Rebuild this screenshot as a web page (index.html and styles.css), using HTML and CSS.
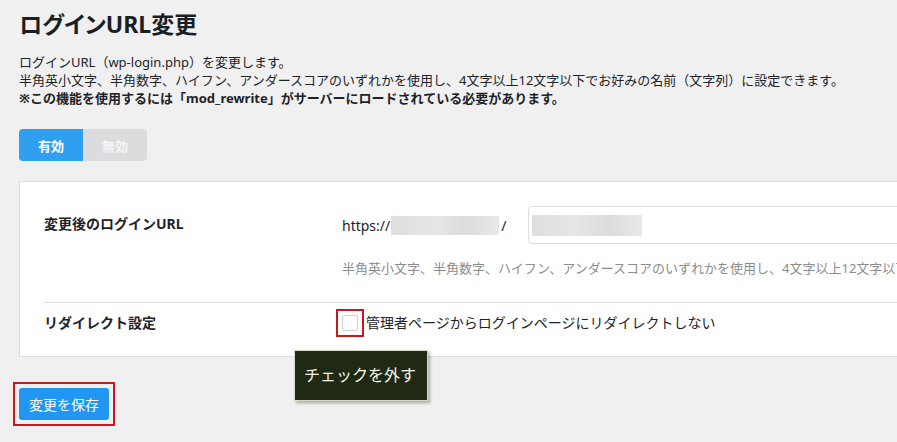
FILE: index.html
```html
<!DOCTYPE html>
<html lang="ja">
<head>
    <meta charset="UTF-8">
    <meta name="viewport" content="width=device-width, initial-scale=1.0">
    <title>ログインURL変更</title>
    <link rel="stylesheet" href="styles.css">
</head>
<body>
    <div class="wrap">
        <h1>ログインURL変更</h1>
        <p class="desc">
            ログインURL（wp-login.php）を変更します。<br>
            半角英小文字、半角数字、ハイフン、アンダースコアのいずれかを使用し、4文字以上12文字以下でお好みの名前（文字列）に設定できます。<br>
            <strong>※この機能を使用するには「mod_rewrite」がサーバーにロードされている必要があります。</strong>
        </p>

        <div class="switch">
            <button class="switch-btn active">有効</button>
            <button class="switch-btn">無効</button>
        </div>

        <div class="card">
            <div class="row row-url">
                <div class="label">変更後のログインURL</div>
                <div class="field">
                    <div class="url-line">
                        <span class="prefix">https://</span>
                        <span class="masked masked-host"></span>
                        <span class="slash">/</span>
                        <div class="url-input">
                            <span class="masked masked-slug"></span>
                        </div>
                    </div>
                    <p class="help">半角英小文字、半角数字、ハイフン、アンダースコアのいずれかを使用し、4文字以上12文字以下でお好みの名前（文字列）に設定できます。</p>
                </div>
            </div>
            <div class="row row-redirect">
                <div class="label">リダイレクト設定</div>
                <div class="field">
                    <label class="check">
                        <span class="mark">
                            <input type="checkbox" class="check-box">
                        </span>
                        <span>管理者ページからログインページにリダイレクトしない</span>
                        <span class="tooltip">チェックを外す</span>
                    </label>
                </div>
            </div>
        </div>

        <div class="actions">
            <button class="save">変更を保存</button>
        </div>
    </div>
</body>
</html>
```

FILE: styles.css
```css
html {
    overflow: hidden;
}

body {
    margin: 0;
    padding: 0;
    min-height: 100vh;
    background-color: #f0f0f1;
    color: #1d2327;
    font-family: "Noto Sans", "Noto Sans CJK JP", sans-serif;
    font-size: 13px;
}

.wrap {
    padding: 0 19px 22px;
    width: 1100px;
}

h1 {
    font-size: 23px;
    font-weight: bold;
    line-height: 30px;
    margin: 9px 0 0;
    color: #1a1f24;
    font-feature-settings: "palt";
}

.desc {
    margin: 14px 0 0;
    line-height: 18px;
}

.switch {
    display: flex;
    margin-top: 22px;
}

.switch-btn {
    width: 64px;
    height: 32px;
    border: none;
    background-color: #dcdcde;
    color: #f4f4f4;
    font-family: inherit;
    font-size: 13px;
    font-weight: bold;
    padding: 0;
}

.switch-btn:first-child {
    border-radius: 4px 0 0 4px;
}

.switch-btn:last-child {
    border-radius: 0 4px 4px 0;
}

.switch-btn.active {
    background-color: #2f9ff0;
    color: #fff;
}

.card {
    margin-top: 20px;
    background-color: #fff;
    border: 1px solid #dcdcde;
    padding: 0 24px;
}

.row {
    display: flex;
    align-items: flex-start;
}

.row-url {
    padding: 24px 0 25px;
    border-bottom: 1px solid #dcdcde;
}

.row-redirect {
    padding: 10px 0 23px;
}

.label {
    width: 298px;
    flex-shrink: 0;
    font-size: 14px;
    font-weight: bold;
    line-height: 20px;
}

.row-url .label {
    margin-top: 8px;
}

.field {
    flex: 1;
    font-size: 14px;
}

.url-line {
    display: flex;
    align-items: center;
    height: 38px;
}

.masked {
    display: inline-block;
    background: linear-gradient(90deg, #dedede, #e6e6e6 40%, #dcdcdc 70%, #e8e8e8);
}

.masked-host {
    width: 108px;
    height: 19px;
    margin-left: 1px;
}

.slash {
    margin: 0 22px 0 2px;
}

.url-input {
    flex: 1;
    height: 36px;
    border: 1px solid #dcdcde;
    border-radius: 4px;
    display: flex;
    align-items: center;
    padding-left: 3px;
}

.masked-slug {
    width: 110px;
    height: 21px;
}

.help {
    margin: 15px 0 0;
    font-size: 13px;
    line-height: 18px;
    color: #8c8c8c;
    white-space: nowrap;
}

.check {
    position: relative;
    display: flex;
    align-items: center;
    line-height: 20px;
}

/* red annotation frames from the screenshot */
.mark {
    position: relative;
    display: flex;
    margin-right: 8px;
}

.mark::after,
.save::after {
    content: '';
    position: absolute;
    top: -6px;
    right: -6px;
    bottom: -6px;
    left: -6px;
    border: 2px solid #c8171d;
}

.check-box {
    appearance: none;
    width: 16px;
    height: 16px;
    margin: 0;
    border: 1px solid #d0d0d0;
    border-radius: 2px;
    background-color: #fff;
}

.tooltip {
    position: absolute;
    left: -48px;
    top: 37px;
    width: 134px;
    height: 51px;
    box-sizing: border-box;
    padding-left: 9px;
    background-color: #1f2914;
    color: #f3f3e6;
    font-size: 16px;
    line-height: 49px;
    border: 1px solid #d8d8cc;
    box-shadow: 2px 2px 3px rgba(0, 0, 0, 0.3);
}

.actions {
    margin-top: 31px;
    display: flex;
}

.save {
    position: relative;
    height: 32px;
    padding: 0 10px;
    border: none;
    border-radius: 3px;
    background-color: #2196f3;
    color: #fff;
    font-family: inherit;
    font-size: 14px;
}
```
